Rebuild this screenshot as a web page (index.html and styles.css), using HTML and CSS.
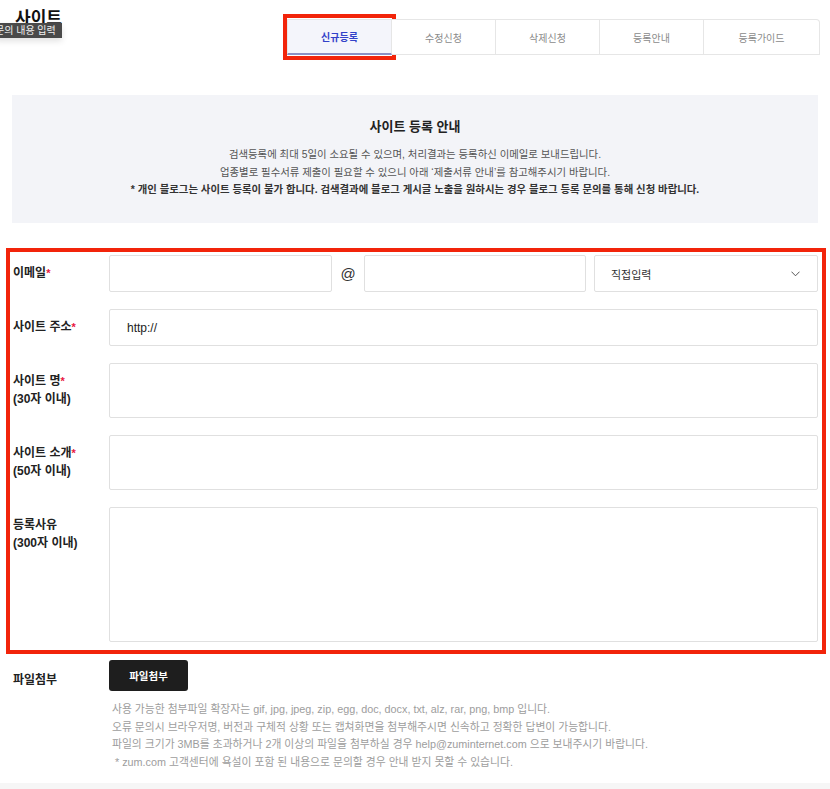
FILE: index.html
```html
<!DOCTYPE html>
<html lang="ko">
<head>
<meta charset="utf-8">
<title>사이트 등록</title>
<link rel="stylesheet" href="styles.css">
</head>
<body>
<div class="page">
  <header class="top">
    <h1 class="title">사이트</h1>
    <div class="tooltip">문의 내용 입력</div>
    <nav class="tabs">
      <a class="tab active">신규등록<span class="mark"></span></a>
      <a class="tab">수정신청</a>
      <a class="tab">삭제신청</a>
      <a class="tab">등록안내</a>
      <a class="tab last">등록가이드</a>
    </nav>
  </header>

  <section class="notice">
    <h2 class="notice-title">사이트 등록 안내</h2>
    <p class="notice-line">검색등록에 최대 5일이 소요될 수 있으며, 처리결과는 등록하신 이메일로 보내드립니다.</p>
    <p class="notice-line">업종별로 필수서류 제출이 필요할 수 있으니 아래 ‘제출서류 안내’를 참고해주시기 바랍니다.</p>
    <p class="notice-line strong">* 개인 블로그는 사이트 등록이 불가 합니다. 검색결과에 블로그 게시글 노출을 원하시는 경우 블로그 등록 문의를 통해 신청 바랍니다.</p>
  </section>

  <form class="form">
    <div class="row">
      <label class="label">이메일<span class="req">*</span></label>
      <div class="email">
        <div class="field"></div>
        <span class="at">@</span>
        <div class="field"></div>
        <div class="field select">
          <span>직접입력</span>
          <svg class="chev" width="9" height="6" viewBox="0 0 9 6"><polyline points="0.5,0.7 4.5,4.8 8.5,0.7" fill="none" stroke="#444" stroke-width="0.9"/></svg>
        </div>
      </div>
    </div>
    <div class="row">
      <label class="label">사이트 주소<span class="req">*</span></label>
      <div class="field text">http://</div>
    </div>
    <div class="row">
      <label class="label">사이트 명<span class="req">*</span><br>(30자 이내)</label>
      <div class="field tall"></div>
    </div>
    <div class="row">
      <label class="label">사이트 소개<span class="req">*</span><br>(50자 이내)</label>
      <div class="field tall"></div>
    </div>
    <div class="row">
      <label class="label">등록사유<br>(300자 이내)</label>
      <div class="field area"></div>
    </div>
  </form>

  <div class="file-row">
    <div class="label file-label">파일첨부</div>
    <div class="file-body">
      <button class="file-btn" type="button">파일첨부</button>
      <ul class="notes">
        <li>사용 가능한 첨부파일 확장자는 gif, jpg, jpeg, zip, egg, doc, docx, txt, alz, rar, png, bmp 입니다.</li>
        <li>오류 문의시 브라우저명, 버전과 구체적 상황 또는 캡쳐화면을 첨부해주시면 신속하고 정확한 답변이 가능합니다.</li>
        <li>파일의 크기가 3MB를 초과하거나 2개 이상의 파일을 첨부하실 경우 help@zuminternet.com 으로 보내주시기 바랍니다.</li>
        <li class="indent">* zum.com 고객센터에 욕설이 포함 된 내용으로 문의할 경우 안내 받지 못할 수 있습니다.</li>
      </ul>
    </div>
  </div>
  <div class="foot"></div>
</div>
</body>
</html>
```

FILE: styles.css
```css
html, body {
  margin: 0;
  padding: 0;
  overflow: hidden;
  background: #fff;
}
body {
  font-family: "Liberation Sans", "Noto Sans CJK KR", sans-serif;
  color: #222;
}
.page {
  width: 830px;
  position: relative;
}

/* header */
.top {
  position: relative;
  height: 62px;
  display: flex;
  justify-content: space-between;
  align-items: flex-start;
}
.title {
  margin: 9px 0 0 15px;
  font-size: 17px;
  line-height: 20px;
  font-weight: 700;
  color: #111;
}
.tooltip {
  position: absolute;
  left: -5px;
  top: 23px;
  height: 15px;
  line-height: 15px;
  padding: 0 6px 0 0;
  background: #4a4a4a;
  color: #f0f0f0;
  font-size: 10px;
  white-space: nowrap;
  box-shadow: 0 3px 6px rgba(0,0,0,0.12);
}
.tabs {
  display: flex;
  margin: 19px 10px 0 0;
}
.tab {
  position: relative;
  box-sizing: border-box;
  width: 104px;
  height: 36px;
  display: flex;
  align-items: center;
  justify-content: center;
  font-size: 10px;
  color: #8a8a8a;
  border-top: 1px solid #e6e6e6;
  border-bottom: 1px solid #e6e6e6;
  border-right: 1px solid #e6e6e6;
  background: #fff;
}
.tab.active {
  width: 105px;
  background: #f4f5fb;
  color: #3342c9;
  font-weight: 700;
  border-left: 1px solid #e6e6e6;
  border-bottom: 2px solid #8a90c4;
}
.tab.last {
  width: 116px;
  border-top-right-radius: 4px;
}
.mark {
  position: absolute;
  left: -5px;
  right: -5px;
  top: -6px;
  bottom: -7px;
  border: 4px solid #f2240a;
}

/* notice */
.notice {
  box-sizing: border-box;
  margin: 33px 0 0 12px;
  width: 806px;
  height: 128px;
  padding-top: 22px;
  background: #f3f4f8;
  text-align: center;
}
.notice-title {
  margin: 0 0 9px;
  font-size: 13px;
  line-height: 20px;
  font-weight: 700;
  color: #222;
}
.notice-line {
  margin: 0;
  font-size: 10.4px;
  line-height: 17.5px;
  color: #555;
}
.notice-line.strong {
  font-weight: 700;
  color: #333;
}

/* form */
.form {
  margin: 25px 4px 0 6px;
  border: 4px solid #f2240a;
  padding: 3px 4px 8px 3px;
  display: flex;
  flex-direction: column;
  gap: 17px;
}
.row {
  display: flex;
  align-items: flex-start;
}
.label {
  flex: 0 0 96px;
  padding-top: 9px;
  font-size: 12px;
  line-height: 18px;
  font-weight: 700;
  color: #222;
}
.req {
  color: #e8173f;
  font-size: 11px;
}
.field {
  box-sizing: border-box;
  flex: 1;
  height: 37px;
  border: 1px solid #e0e0e0;
  border-radius: 2px;
  background: #fff;
}
.field.text {
  display: flex;
  align-items: center;
  padding-left: 17px;
  font-size: 12px;
  color: #222;
}
.field.tall { height: 55px; }
.field.area { height: 135px; }
.email {
  flex: 1;
  display: flex;
}
.email .field { flex: 0 0 223px; }
.email .field + .at + .field { flex: 0 0 222px; }
.at {
  flex: 0 0 32px;
  height: 37px;
  line-height: 37px;
  text-align: center;
  font-size: 15px;
  color: #333;
}
.email .field.select {
  flex: 0 0 224px;
  margin-left: 8px;
  display: flex;
  align-items: center;
  justify-content: space-between;
  padding: 0 17px 0 16px;
  font-size: 11px;
  color: #333;
}
.chev { display: block; }

/* file */
.file-row {
  display: flex;
  margin-top: 6px;
  padding-left: 13px;
}
.file-label {
  padding-top: 11px;
}
.file-body {
  flex: 1;
}
.file-btn {
  display: block;
  width: 79px;
  height: 31px;
  border: 0;
  border-radius: 3px;
  background: #1e1e1e;
  color: #fff;
  font-family: inherit;
  font-size: 10.5px;
  font-weight: 700;
  padding: 0;
}
.notes {
  list-style: none;
  margin: 10px 0 0;
  padding: 0 0 0 3px;
  font-size: 10.8px;
  line-height: 17.5px;
  color: #9d9d9d;
}
.notes .indent { padding-left: 3px; }
.foot {
  margin-top: 12px;
  height: 10px;
  background: #f6f6f6;
}
```
